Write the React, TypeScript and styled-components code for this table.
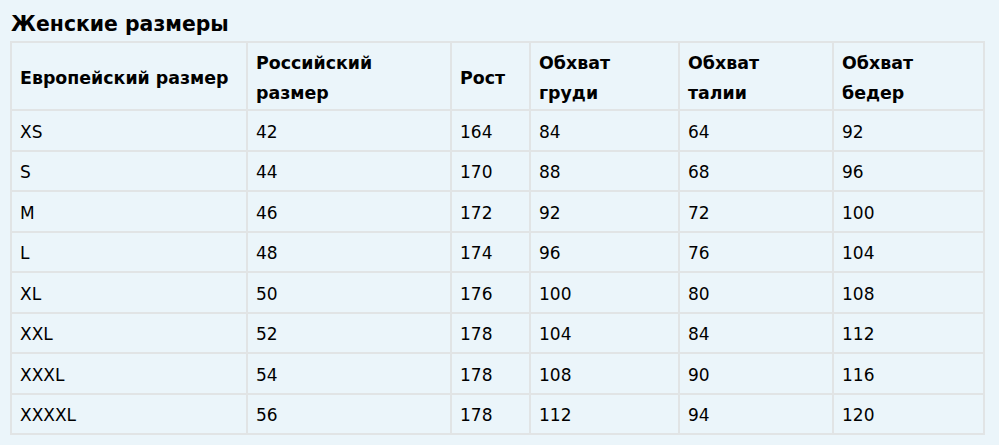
import React from "react";
import styled, { createGlobalStyle } from "styled-components";

const Global = createGlobalStyle`
  html, body { margin: 0; padding: 0; background: #ebf5fa; }
  body { font-family: "DejaVu Sans", Tahoma, Verdana, sans-serif; color: #000; }
`;

const Page = styled.div`
  padding: 12px 0 0 10px;
  width: 973px;
`;

const Title = styled.h2`
  margin: 0 0 5px 1px;
  font-size: 20.4px;
  line-height: 24px;
  font-weight: bold;
`;

const Table = styled.table`
  border-collapse: collapse;
  width: 973px;
  table-layout: fixed;
  border: 1px solid #dcdfe0;
`;

const HeadCell = styled.th<{ $w: number }>`
  width: ${(p) => p.$w}px;
  height: 68px;
  box-sizing: border-box;
  border: 2px solid #e1e4e5;
  padding: 3px 14px 0 8px;
  text-align: left;
  font-size: 17.4px;
  line-height: 30px;
  font-weight: bold;
`;

const Cell = styled.td`
  height: 40.5px;
  box-sizing: border-box;
  border: 2px solid #e1e4e5;
  padding: 3px 8px 0 8px;
  font-size: 17px;
  line-height: 20px;
`;

const cols: [string, number][] = [
  ["Европейский размер", 236],
  ["Российский размер", 204],
  ["Рост", 79],
  ["Обхват груди", 149],
  ["Обхват талии", 154],
  ["Обхват бедер", 151],
];

const rows: string[][] = [
  ["XS", "42", "164", "84", "64", "92"],
  ["S", "44", "170", "88", "68", "96"],
  ["M", "46", "172", "92", "72", "100"],
  ["L", "48", "174", "96", "76", "104"],
  ["XL", "50", "176", "100", "80", "108"],
  ["XXL", "52", "178", "104", "84", "112"],
  ["XXXL", "54", "178", "108", "90", "116"],
  ["XXXXL", "56", "178", "112", "94", "120"],
];

export default function App() {
  return (
    <>
      <Global />
      <Page>
        <Title>Женские размеры</Title>
        <Table>
          <thead>
            <tr>
              {cols.map(([t, w]) => (
                <HeadCell key={t} $w={w}>{t}</HeadCell>
              ))}
            </tr>
          </thead>
          <tbody>
            {rows.map((r) => (
              <tr key={r[0]}>
                {r.map((c, i) => (
                  <Cell key={i}>{c}</Cell>
                ))}
              </tr>
            ))}
          </tbody>
        </Table>
      </Page>
    </>
  );
}
